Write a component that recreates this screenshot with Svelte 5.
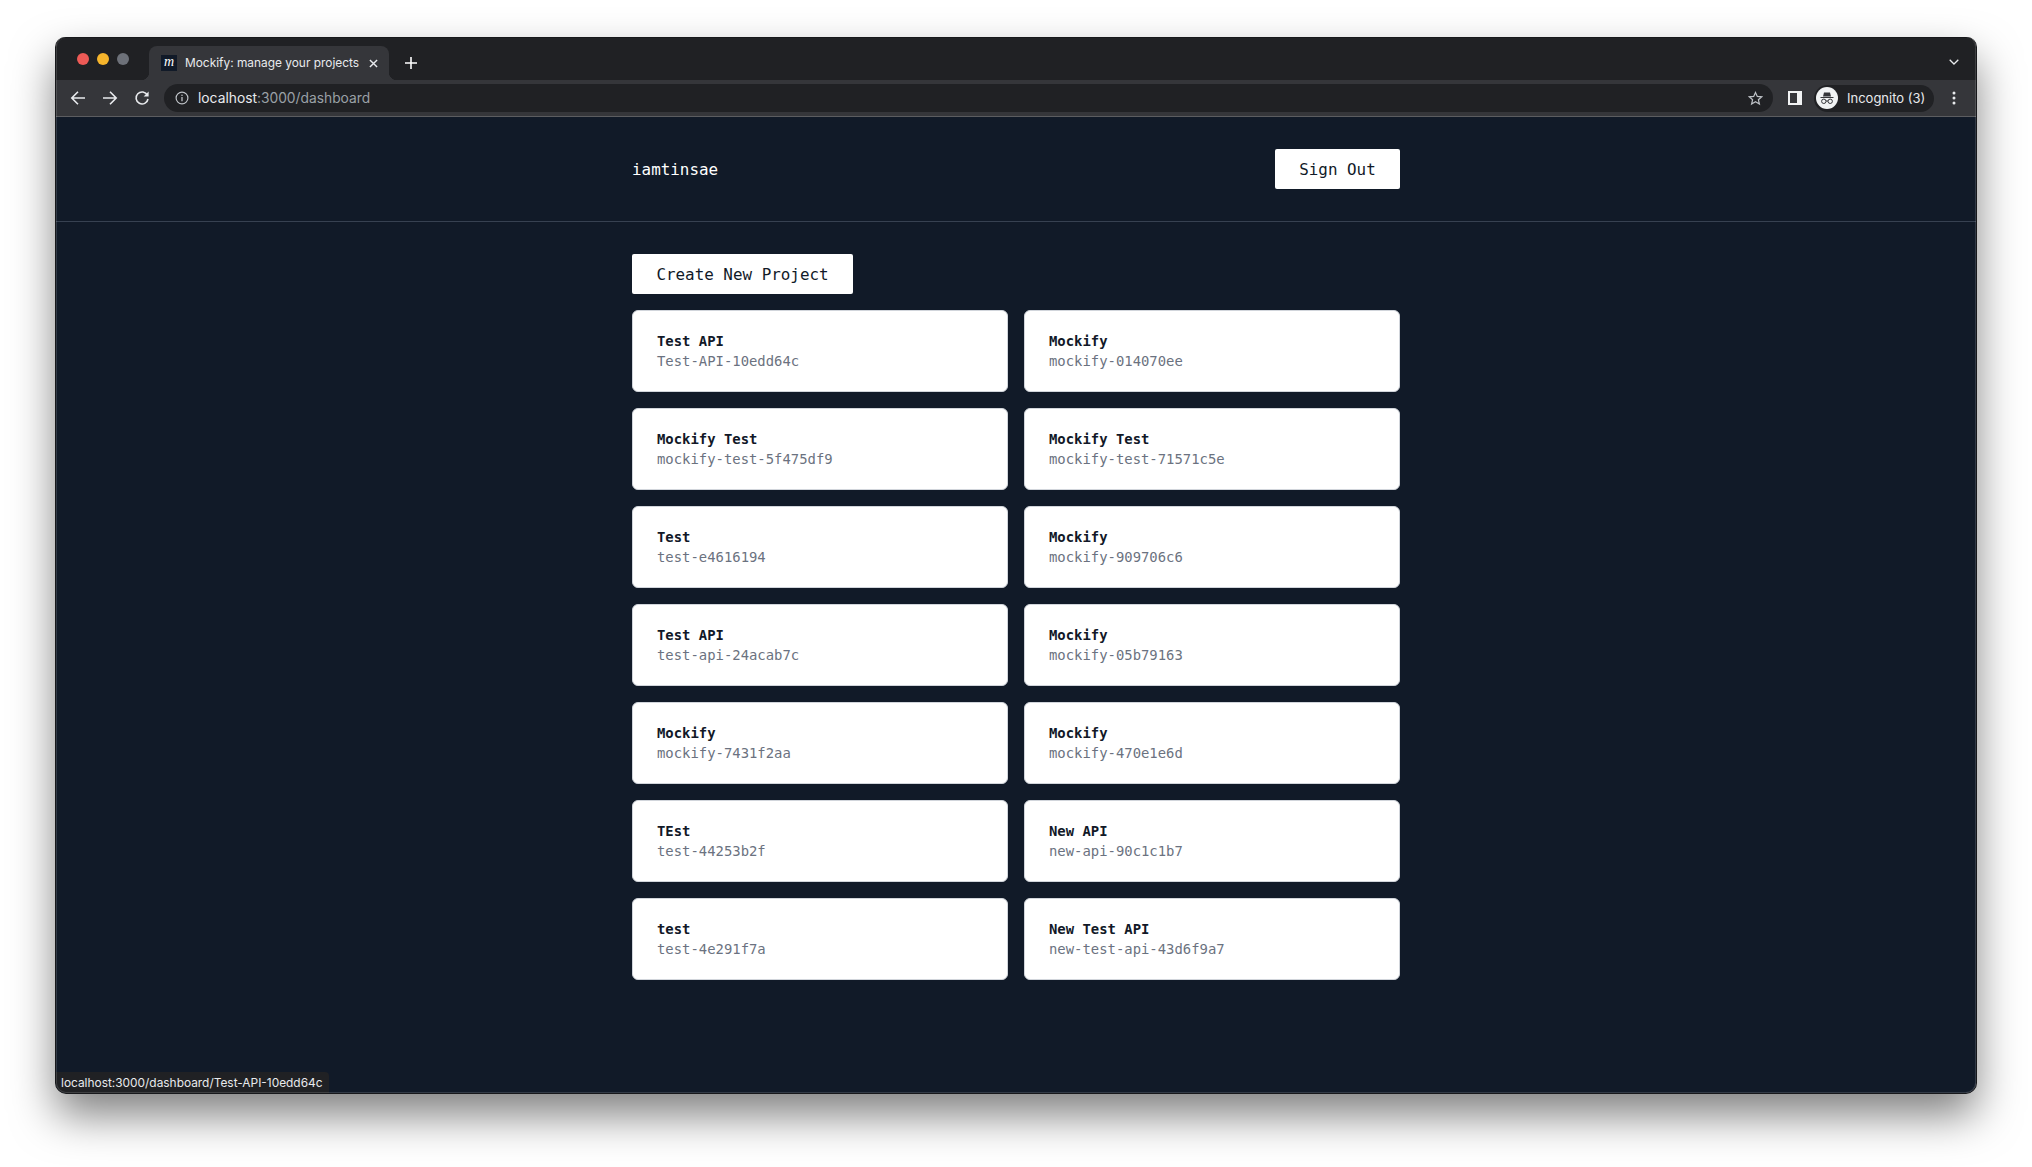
<script lang="ts">
	const projects = [
		['Test API', 'Test-API-10edd64c'],
		['Mockify', 'mockify-014070ee'],
		['Mockify Test', 'mockify-test-5f475df9'],
		['Mockify Test', 'mockify-test-71571c5e'],
		['Test', 'test-e4616194'],
		['Mockify', 'mockify-909706c6'],
		['Test API', 'test-api-24acab7c'],
		['Mockify', 'mockify-05b79163'],
		['Mockify', 'mockify-7431f2aa'],
		['Mockify', 'mockify-470e1e6d'],
		['TEst', 'test-44253b2f'],
		['New API', 'new-api-90c1c1b7'],
		['test', 'test-4e291f7a'],
		['New Test API', 'new-test-api-43d6f9a7'],
	];
</script>

<div class="desktop">
	<div class="window">
		<div class="tabstrip">
			<div class="lights">
				<span class="light red"></span>
				<span class="light yellow"></span>
				<span class="light grey"></span>
			</div>
			<div class="tab">
				<span class="favicon">m</span>
				<span class="tab-title">Mockify: manage your projects</span>
				<svg class="tab-close" width="9" height="9" viewBox="0 0 10 10">
					<path d="M1 1l8 8M9 1l-8 8" stroke="#e8eaed" stroke-width="1.6" fill="none" />
				</svg>
			</div>
			<svg class="new-tab" width="12" height="12" viewBox="0 0 12 12">
				<path d="M6 0v12M0 6h12" stroke="#fff" stroke-width="1.6" fill="none" />
			</svg>
			<svg class="tab-menu" width="10" height="6" viewBox="0 0 10 6">
				<path d="M.7.7L5 5l4.3-4.3" stroke="#e8eaed" stroke-width="1.3" fill="none" />
			</svg>
		</div>

		<div class="toolbar">
			<svg class="nav" width="16" height="16" viewBox="0 0 16 16">
				<path d="M15 8H2M8 1.8L1.8 8 8 14.2" stroke="#e8eaed" stroke-width="1.6" fill="none" />
			</svg>
			<svg class="nav" width="16" height="16" viewBox="0 0 16 16">
				<path d="M1 8h13M8 1.8L14.2 8 8 14.2" stroke="#e8eaed" stroke-width="1.6" fill="none" />
			</svg>
			<svg class="nav" width="16" height="16" viewBox="0 0 16 16">
				<path d="M13.4 5.2A6 6 0 1 0 14 9" stroke="#e8eaed" stroke-width="1.6" fill="none" />
				<path d="M14.6 1.6v5h-5z" fill="#e8eaed" />
			</svg>
			<div class="omnibox">
				<svg width="14" height="14" viewBox="0 0 14 14">
					<circle cx="7" cy="7" r="5.9" stroke="#bdc1c6" stroke-width="1.2" fill="none" />
					<path d="M7 6v4.2" stroke="#bdc1c6" stroke-width="1.3" />
					<circle cx="7" cy="4.2" r=".8" fill="#bdc1c6" />
				</svg>
				<span class="url"><span class="host">localhost</span>:3000/dashboard</span>
				<svg class="star" width="15" height="15" viewBox="0 0 15 15">
					<path d="M7.5 1.4l1.8 4 4.4.4-3.3 2.9 1 4.3-3.9-2.3-3.9 2.3 1-4.3L1.300 5.800l4.400-.4z" stroke="#bdc1c6" stroke-width="1.2" fill="none" />
				</svg>
			</div>
			<svg class="panel" width="14" height="14" viewBox="0 0 14 14">
				<path d="M0 0h14v14H0zM2 2v10h7V2z" fill="#f1f3f4" fill-rule="evenodd" />
			</svg>
			<div class="incognito">
				<svg width="22" height="22" viewBox="0 0 22 22">
					<circle cx="11" cy="11" r="11" fill="#f1f3f4" />
					<path d="M8 5.500h6l1 4H7zM4.500 10h13v1h-13z" fill="#35363a" />
					<circle cx="7.800" cy="14.300" r="2.200" stroke="#35363a" stroke-width="1" fill="none" />
					<circle cx="14.200" cy="14.300" r="2.200" stroke="#35363a" stroke-width="1" fill="none" />
					<path d="M10 14h2" stroke="#35363a" stroke-width="1" />
				</svg>
				<span>Incognito (3)</span>
			</div>
			<svg class="dots" width="4" height="14" viewBox="0 0 4 14">
				<circle cx="2" cy="2" r="1.500" fill="#e8eaed" />
				<circle cx="2" cy="7" r="1.500" fill="#e8eaed" />
				<circle cx="2" cy="12" r="1.500" fill="#e8eaed" />
			</svg>
		</div>

		<main class="page">
			<header class="header">
				<div class="container header-row">
					<span class="user">iamtinsae</span>
					<button class="btn signout">Sign Out</button>
				</div>
			</header>
			<section class="container body">
				<button class="btn create">Create New Project</button>
				<div class="grid">
					{#each projects as [name, slug]}
						<a class="card" href="#{slug}">
							<span class="name">{name}</span>
							<span class="slug">{slug}</span>
						</a>
					{/each}
				</div>
			</section>
			<div class="status">localhost:3000/dashboard/Test-API-10edd64c</div>
		</main>
	</div>
</div>

<style>
	:global(body) {
		background: #fff;
	}
	.desktop {
		box-sizing: border-box;
		height: 100vh;
		padding: 37px 56px 74px;
		overflow: hidden;
	}
	.window {
		height: 100%;
		display: flex;
		flex-direction: column;
		position: relative;
		border-radius: 10px;
		overflow: hidden;
		box-shadow: -1px 0 0 #17181b, 1px 0 0 #17181b, 0 1px 0 #17181b, 0 22px 44px rgba(0, 0, 0, .5);
		font-family: Inter, "Liberation Sans", sans-serif;
	}
	.window::after {
		content: '';
		position: absolute;
		inset: 0;
		border-radius: 10px;
		box-shadow: inset 0 1px 0 #17181b, inset 0 0 0 1px rgba(255, 255, 255, .14);
		pointer-events: none;
	}
	.tabstrip {
		height: 43px;
		flex: none;
		background: #202124;
		display: flex;
		align-items: flex-end;
	}
	.lights {
		display: flex;
		gap: 8px;
		width: 66px;
		padding-left: 21px;
		align-self: flex-start;
		padding-top: 16px;
		box-sizing: content-box;
	}
	.light {
		width: 12px;
		height: 12px;
		border-radius: 50%;
	}
	.red { background: #ed5a56; }
	.yellow { background: #f6b52c; }
	.grey { background: #6d7179; }
	.tab {
		position: relative;
		width: 240px;
		height: 34px;
		margin-left: 6px;
		background: #35363a;
		border-radius: 8px 8px 0 0;
		display: flex;
		align-items: center;
		padding: 0 12px;
		box-sizing: border-box;
		color: #e8eaed;
	}
	.tab::before,
	.tab::after {
		content: '';
		position: absolute;
		bottom: 0;
		width: 8px;
		height: 8px;
	}
	.tab::before {
		left: -8px;
		background: radial-gradient(circle at 0 0, transparent 8px, #35363a 8.5px);
	}
	.tab::after {
		right: -8px;
		background: radial-gradient(circle at 100% 0, transparent 8px, #35363a 8.5px);
	}
	.favicon {
		width: 16px;
		height: 16px;
		background: #111a28;
		color: #fff;
		font: italic 14px/13px "Liberation Serif", serif;
		text-align: center;
		flex: none;
	}
	.tab-title {
		margin-left: 8px;
		padding-bottom: 1px;
		font-size: 11.9px;
		white-space: nowrap;
		flex: 1;
	}
	.tab-close {
		flex: none;
		margin-right: -1px;
	}
	.new-tab {
		margin: 0 0 11px 16px;
	}
	.tab-menu {
		margin: 0 17px 15px auto;
	}
	.toolbar {
		height: 36px;
		flex: none;
		background: #35363a;
		border-bottom: 1px solid #5c5d60;
		display: flex;
		align-items: center;
		padding: 0 20px 0 14px;
		box-sizing: content-box;
	}
	.nav {
		flex: none;
		margin-right: 16px;
	}
	.omnibox {
		flex: 1;
		height: 28px;
		margin-left: -2px;
		background: #202124;
		border-radius: 14px;
		display: flex;
		align-items: center;
		padding: 0 10px 0 11px;
		font-size: 13.8px;
		color: #9aa0a6;
	}
	.url {
		margin-left: 9px;
		flex: 1;
	}
	.host {
		color: #e8eaed;
	}
	.panel {
		flex: none;
		margin-left: 15px;
	}
	.incognito {
		display: flex;
		align-items: center;
		gap: 9px;
		width: 120px;
		height: 27px;
		margin: 0 18px 0 12px;
		padding-left: 2px;
		box-sizing: border-box;
		background: #202124;
		border-radius: 14px;
		color: #e8eaed;
		font-size: 13px;
		white-space: nowrap;
		flex: none;
	}
	.dots {
		flex: none;
	}
	.page {
		flex: 1;
		position: relative;
		background: #111a28;
		font-family: "DejaVu Sans Mono", monospace;
	}
	.container {
		width: 768px;
		margin: 0 auto;
	}
	.header {
		height: 104px;
		border-bottom: 1px solid #374151;
	}
	.header-row {
		height: 100%;
		display: flex;
		align-items: center;
		justify-content: space-between;
		box-sizing: border-box;
	}
	.user {
		color: #fff;
		font-size: 15.9px;
	}
	.btn {
		height: 40px;
		border: 0;
		border-radius: 2px;
		background: #fff;
		color: #111a28;
		font: 15.9px "DejaVu Sans Mono", monospace;
		padding: 0 24px;
	}
	.signout {
		width: 125px;
		padding: 0;
	}
	.body {
		padding-top: 32px;
	}
	.create {
		display: block;
		width: 221px;
		padding: 0;
	}
	.grid {
		margin-top: 16px;
		display: grid;
		grid-template-columns: 1fr 1fr;
		gap: 16px;
	}
	.card {
		box-sizing: border-box;
		height: 82px;
		background: #fff;
		border: 1px solid #d1d5db;
		border-radius: 6px;
		padding: 20px 24px;
		display: flex;
		flex-direction: column;
		text-decoration: none;
		font-size: 13.9px;
		line-height: 20px;
	}
	.name {
		color: #111827;
		font-weight: 700;
	}
	.slug {
		color: #6b7280;
	}
	.status {
		position: absolute;
		left: 0;
		bottom: 0;
		height: 21px;
		padding: 0 6px 0 5px;
		background: #202124;
		border-top-right-radius: 4px;
		color: #e8eaed;
		font: 11.9px/21px Inter, "Liberation Sans", sans-serif;
		white-space: nowrap;
	}
</style>
